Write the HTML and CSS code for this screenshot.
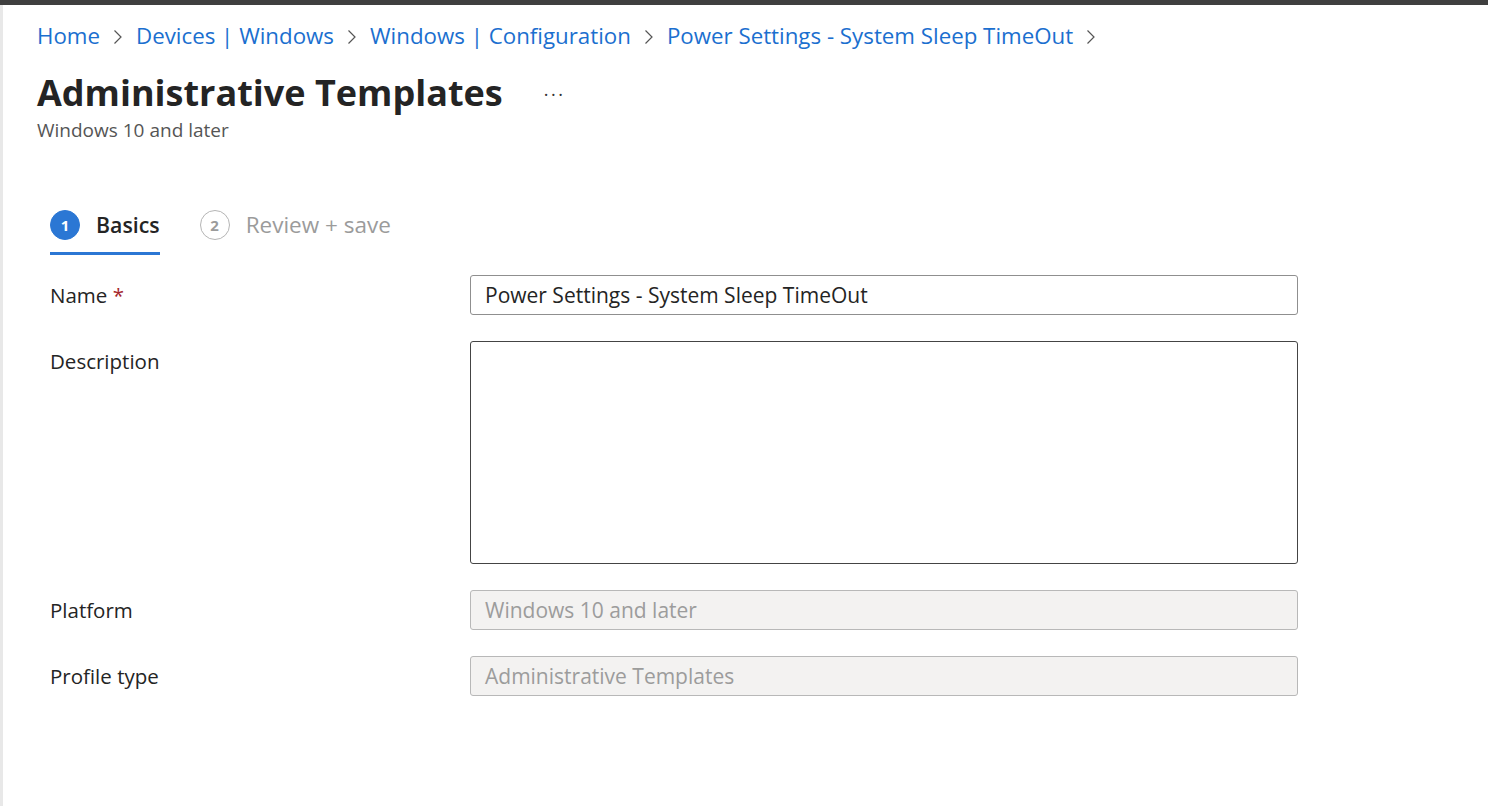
FILE: index.html
```html
<!DOCTYPE html>
<html lang="en">
<head>
<meta charset="utf-8">
<title>Administrative Templates</title>
<link rel="stylesheet" href="styles.css">
</head>
<body>
<div class="topbar"></div>
<div class="shell">
  <div class="rail"></div>
  <main class="main">
    <nav class="breadcrumb">
      <a class="crumb">Home</a><span class="sep"><svg viewBox="0 0 10 16" width="10" height="16"><path d="M1.5 1.5 L8 8 L1.5 14.5" fill="none" stroke="#555" stroke-width="1.2"/></svg></span>
      <a class="crumb">Devices | Windows</a><span class="sep"><svg viewBox="0 0 10 16" width="10" height="16"><path d="M1.5 1.5 L8 8 L1.5 14.5" fill="none" stroke="#555" stroke-width="1.2"/></svg></span>
      <a class="crumb">Windows | Configuration</a><span class="sep"><svg viewBox="0 0 10 16" width="10" height="16"><path d="M1.5 1.5 L8 8 L1.5 14.5" fill="none" stroke="#555" stroke-width="1.2"/></svg></span>
      <a class="crumb">Power Settings - System Sleep TimeOut</a><span class="sep"><svg viewBox="0 0 10 16" width="10" height="16"><path d="M1.5 1.5 L8 8 L1.5 14.5" fill="none" stroke="#555" stroke-width="1.2"/></svg></span>
    </nav>
    <div class="title-row">
      <h1 class="title">Administrative Templates</h1>
      <span class="more">···</span>
    </div>
    <div class="subtitle">Windows 10 and later</div>

    <div class="steps">
      <div class="step active">
        <span class="num">1</span><span class="step-label">Basics</span>
      </div>
      <div class="step">
        <span class="num">2</span><span class="step-label">Review + save</span>
      </div>
    </div>

    <div class="form">
      <div class="row">
        <div class="label">Name <span class="req">*</span></div>
        <div class="field">Power Settings - System Sleep TimeOut</div>
      </div>
      <div class="row">
        <div class="label">Description</div>
        <div class="field area"></div>
      </div>
      <div class="row">
        <div class="label">Platform</div>
        <div class="field disabled">Windows 10 and later</div>
      </div>
      <div class="row">
        <div class="label">Profile type</div>
        <div class="field disabled">Administrative Templates</div>
      </div>
    </div>
  </main>
</div>
</body>
</html>
```
FILE: styles.css
```css
* { box-sizing: border-box; }
html, body { margin: 0; padding: 0; background: #fff; }
body {
  font-family: "Open Sans", "Noto Sans", "Liberation Sans", sans-serif;
  color: #242424;
  height: 806px;
  overflow: hidden;
}
.topbar { height: 5px; background: #3f3f3f; }
.shell { display: flex; height: 801px; }
.rail { width: 3px; background: #e8e8e8; flex: none; }
.main { flex: 1; padding-left: 34px; }

.breadcrumb {
  display: flex;
  align-items: center;
  height: 60px;
  padding-top: 1px;
  font-size: 22.3px;
}
.crumb { color: #1b6fcf; }
.sep { display: inline-flex; margin: 0 13px 0 13px; padding-top: 2px; }

.title-row { display: flex; align-items: center; height: 60px; margin-top: -3px; }
.title { margin: 0; font-size: 36px; font-weight: 700; color: #242424; }
.more { margin-left: 41px; font-size: 18px; letter-spacing: 2.5px; color: #333; padding-top: 4px; }
.subtitle { font-size: 19px; color: #555; margin-top: -5px; }

.steps { display: flex; gap: 40px; margin-top: 66px; margin-left: 13px; }
.step {
  display: flex; align-items: center; gap: 16px;
  padding-bottom: 12px;
  border-bottom: 3px solid transparent;
  color: #9b9b9b;
  font-size: 22.5px;
}
.step.active { border-bottom-color: #2b77d4; color: #242424; font-weight: 600; font-size: 21.3px; }
.num {
  width: 30px; height: 30px; border-radius: 50%;
  border: 1.5px solid #b5b5b5;
  display: inline-flex; align-items: center; justify-content: center;
  font-size: 15px; font-weight: 700; color: #9b9b9b;
}
.step.active .num { background: #2b77d4; border-color: #2b77d4; color: #fff; }

.form { margin-left: 13px; margin-top: 20px; display: flex; flex-direction: column; gap: 26px; }
.row { display: flex; }
.label { width: 420px; font-size: 20.5px; padding-top: 6px; color: #242424; }
.req { color: #a4262c; }
.field {
  width: 828px; height: 40px;
  border: 1px solid #8f8f8f; border-radius: 3px;
  padding: 0 14px;
  display: flex; align-items: center;
  font-size: 21px; color: #242424;
}
.field.area { height: 223px; border-color: #444; }
.field.disabled { background: #f3f2f1; border-color: #b8b8b8; color: #9c9c9c; }
```
